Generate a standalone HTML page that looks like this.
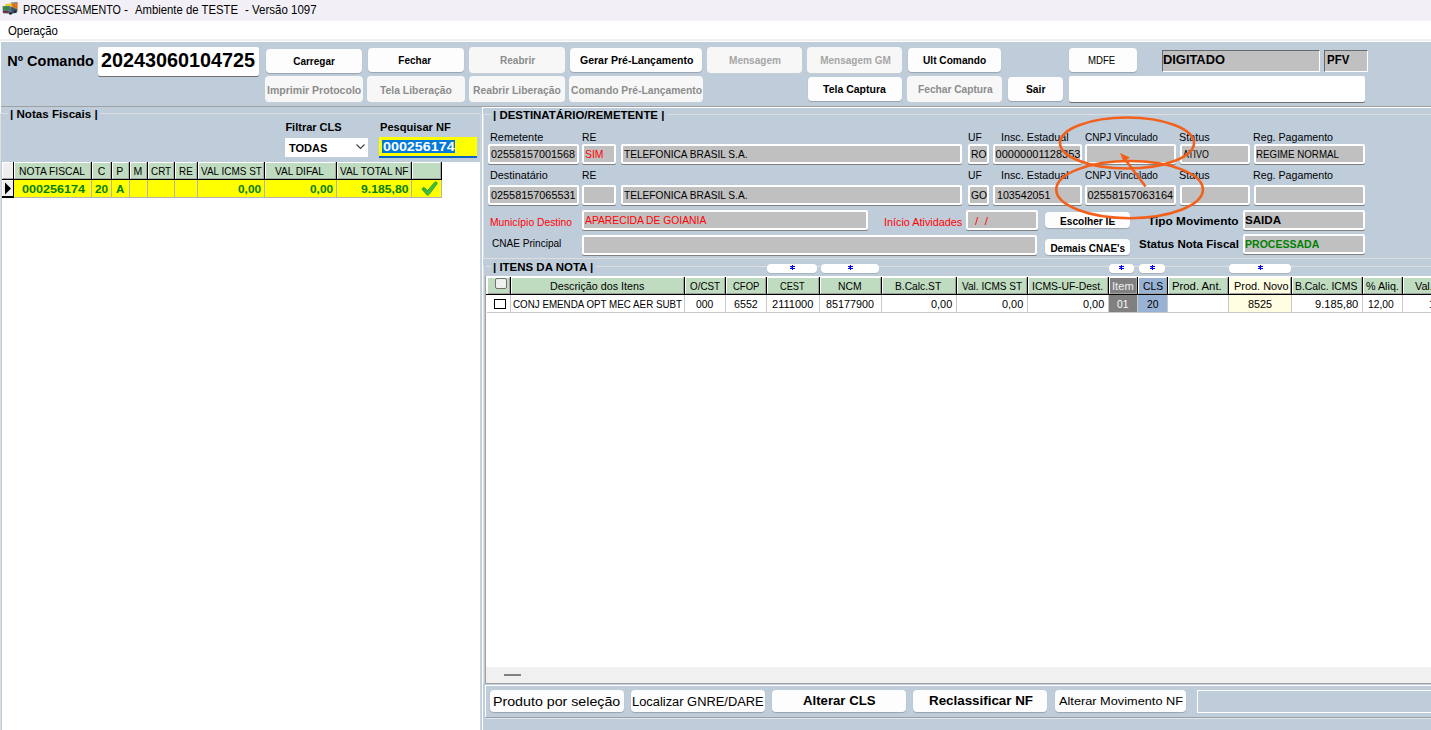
<!DOCTYPE html><html><head><meta charset="utf-8"><style>
html,body{margin:0;padding:0;width:1431px;height:730px;overflow:hidden;background:#bfcddb}
body{position:relative;font-family:"Liberation Sans",sans-serif}
.a{position:absolute}
.t{position:absolute;white-space:pre}
</style></head><body>
<div class="a" style="left:0px;top:0px;width:1431px;height:21px;background:#f2f0f6"></div>
<svg class="a" style="left:0;top:0" width="24" height="20" viewBox="0 0 24 20">
<path d="M11 2.6 L17.2 2 L17.8 3.2 L11.5 4.2 Z" fill="#6a8298"/>
<path d="M5.2 4 L11.6 3.2 L12 6.3 L5.4 6.8 Z" fill="#e8cc30"/>
<path d="M11.5 3.6 L17.8 2.8 L17.6 9.6 L11.8 10.2 Z" fill="#e0822a"/>
<path d="M13 4 L13.2 9.8 M14.6 3.8 L14.8 9.6 M16.2 3.4 L16.4 9.4" stroke="#b85a18" stroke-width="0.5"/>
<path d="M2.6 6.2 L10.2 6 L10.6 13.8 L2.8 13.2 Z" fill="#56748a"/>
<path d="M3.2 6.6 L9 6.4 L9.2 9.8 L3.2 9.8 Z" fill="#2f8a3c"/>
<path d="M3.2 11 L8.6 11.2 L8.6 12.6 L3.2 12.4 Z" fill="#7a1414"/>
<path d="M10.2 6.5 L17.6 9.4 L17 12.6 L10.6 14.2 Z" fill="#3c566a"/>
<circle cx="10.4" cy="13.4" r="1.4" fill="#1c2a36"/><circle cx="15" cy="11.6" r="1.3" fill="#1c2a36"/>
</svg>
<div class="t" style="left:23.00px;top:3.80px;font-size:12px;line-height:12px;color:#000;transform:scaleX(0.8915);transform-origin:0 0;">PROCESSAMENTO</div>
<div class="t" style="left:124.10px;top:3.80px;font-size:12px;line-height:12px;color:#000;">-</div>
<div class="t" style="left:135.40px;top:3.80px;font-size:12px;line-height:12px;color:#000;transform:scaleX(0.9430);transform-origin:0 0;">Ambiente de TESTE</div>
<div class="t" style="left:245.20px;top:3.80px;font-size:12px;line-height:12px;color:#000;transform:scaleX(0.9581);transform-origin:0 0;">- Versão 1097</div>
<div class="a" style="left:0px;top:21px;width:1431px;height:18px;background:#fff"></div>
<div class="t" style="left:8.00px;top:24.80px;font-size:12px;line-height:12px;color:#000;transform:scaleX(0.9469);transform-origin:0 0;">Operação</div>
<div class="a" style="left:0px;top:39px;width:1431px;height:2px;background:#f0f0f0"></div>
<div class="a" style="left:0px;top:41px;width:1431px;height:1px;background:#fff"></div>
<div class="a" style="left:1px;top:42px;width:1430px;height:688px;background:#bfcddb"></div>
<div class="a" style="left:0px;top:42px;width:1px;height:71px;background:#fff"></div>
<div class="t" style="left:7.30px;top:54.47px;font-size:14.5px;line-height:14.5px;color:#000;font-weight:bold;">Nº Comando</div>
<div class="a" style="left:98px;top:47px;width:161px;height:29px;background:#fff;border-radius:2px;box-shadow:0 1px 0 #707070"></div>
<div class="t" style="left:101.20px;top:51.14px;font-size:19.6px;line-height:19.6px;color:#000;font-weight:bold;transform:scaleX(1.0094);transform-origin:0 0;">20243060104725</div>
<div class="a" style="left:266px;top:49px;width:96px;height:24px;background:#fdfdfd;border-radius:4px;box-shadow:0 1px 1px #9aa4ae"></div>
<div class="t" style="left:293.20px;top:56.50px;font-size:10px;line-height:10px;color:#000;font-weight:bold;">Carregar</div>
<div class="a" style="left:368px;top:48px;width:96px;height:24px;background:#fdfdfd;border-radius:4px;box-shadow:0 1px 1px #9aa4ae"></div>
<div class="t" style="left:398.30px;top:55.50px;font-size:10px;line-height:10px;color:#000;font-weight:bold;">Fechar</div>
<div class="a" style="left:469px;top:47px;width:96px;height:26px;background:#f7f7f7;border-radius:4px;box-shadow:0 1px 0 #c6ced6"></div>
<div class="t" style="left:500.00px;top:55.50px;font-size:10px;line-height:10px;color:#8c8c8c;font-weight:bold;transform:scaleX(1.0052);transform-origin:0 0;">Reabrir</div>
<div class="a" style="left:570px;top:48px;width:132px;height:24px;background:#fdfdfd;border-radius:4px;box-shadow:0 1px 1px #9aa4ae"></div>
<div class="t" style="left:580.00px;top:55.50px;font-size:10px;line-height:10px;color:#000;font-weight:bold;transform:scaleX(1.0511);transform-origin:0 0;">Gerar Pré-Lançamento</div>
<div class="a" style="left:707px;top:47px;width:95px;height:26px;background:#f7f7f7;border-radius:4px;box-shadow:0 1px 0 #c6ced6"></div>
<div class="t" style="left:729.40px;top:55.50px;font-size:10px;line-height:10px;color:#a6a6a6;font-weight:bold;transform:scaleX(1.0061);transform-origin:0 0;">Mensagem</div>
<div class="a" style="left:807px;top:47px;width:95px;height:26px;background:#f7f7f7;border-radius:4px;box-shadow:0 1px 0 #c6ced6"></div>
<div class="t" style="left:820.20px;top:55.50px;font-size:10px;line-height:10px;color:#a6a6a6;font-weight:bold;">Mensagem GM</div>
<div class="a" style="left:908px;top:48px;width:93px;height:24px;background:#fdfdfd;border-radius:4px;box-shadow:0 1px 1px #9aa4ae"></div>
<div class="t" style="left:923.40px;top:55.50px;font-size:10px;line-height:10px;color:#000;font-weight:bold;transform:scaleX(1.0145);transform-origin:0 0;">Ult Comando</div>
<div class="a" style="left:1069px;top:48px;width:68px;height:24px;background:#fdfdfd;border-radius:4px;box-shadow:0 1px 1px #9aa4ae"></div>
<div class="t" style="left:1088.00px;top:55.08px;font-size:10.5px;line-height:10.5px;color:#000;transform:scaleX(0.9149);transform-origin:0 0;">MDFE</div>
<div class="a" style="left:1162px;top:50px;width:158px;height:22px;background:#c0c0c0;border-top:1px solid #696969;border-left:1px solid #696969;border-bottom:1px solid #fff;border-right:1px solid #fff;box-sizing:border-box"></div>
<div class="t" style="left:1163.40px;top:53.50px;font-size:12px;line-height:12px;color:#000;font-weight:bold;transform:scaleX(1.0726);transform-origin:0 0;">DIGITADO</div>
<div class="a" style="left:1324px;top:50px;width:44px;height:22px;background:#c0c0c0;border-top:1px solid #696969;border-left:1px solid #696969;border-bottom:1px solid #fff;border-right:1px solid #fff;box-sizing:border-box"></div>
<div class="t" style="left:1326.50px;top:53.50px;font-size:12px;line-height:12px;color:#000;font-weight:bold;transform:scaleX(0.9541);transform-origin:0 0;">PFV</div>
<div class="a" style="left:265px;top:76px;width:98px;height:26px;background:#f7f7f7;border-radius:4px;box-shadow:0 1px 0 #c6ced6"></div>
<div class="t" style="left:267.20px;top:85.70px;font-size:10px;line-height:10px;color:#8c8c8c;font-weight:bold;transform:scaleX(1.0537);transform-origin:0 0;">Imprimir Protocolo</div>
<div class="a" style="left:367px;top:76px;width:98px;height:26px;background:#f7f7f7;border-radius:4px;box-shadow:0 1px 0 #c6ced6"></div>
<div class="t" style="left:380.40px;top:85.70px;font-size:10px;line-height:10px;color:#8c8c8c;font-weight:bold;transform:scaleX(1.0372);transform-origin:0 0;">Tela Liberação</div>
<div class="a" style="left:469px;top:76px;width:96px;height:26px;background:#f7f7f7;border-radius:4px;box-shadow:0 1px 0 #c6ced6"></div>
<div class="t" style="left:473.10px;top:85.70px;font-size:10px;line-height:10px;color:#8c8c8c;font-weight:bold;transform:scaleX(1.0335);transform-origin:0 0;">Reabrir Liberação</div>
<div class="a" style="left:569px;top:76px;width:134px;height:26px;background:#f7f7f7;border-radius:4px;box-shadow:0 1px 0 #c6ced6"></div>
<div class="t" style="left:571.20px;top:85.70px;font-size:10px;line-height:10px;color:#8c8c8c;font-weight:bold;transform:scaleX(1.0298);transform-origin:0 0;">Comando Pré-Lançamento</div>
<div class="a" style="left:808px;top:77px;width:94px;height:24px;background:#fdfdfd;border-radius:4px;box-shadow:0 1px 1px #9aa4ae"></div>
<div class="t" style="left:823.20px;top:84.80px;font-size:10px;line-height:10px;color:#000;font-weight:bold;transform:scaleX(1.0501);transform-origin:0 0;">Tela Captura</div>
<div class="a" style="left:907px;top:76px;width:95px;height:26px;background:#f7f7f7;border-radius:4px;box-shadow:0 1px 0 #c6ced6"></div>
<div class="t" style="left:917.60px;top:84.80px;font-size:10px;line-height:10px;color:#8c8c8c;font-weight:bold;transform:scaleX(1.0184);transform-origin:0 0;">Fechar Captura</div>
<div class="a" style="left:1008px;top:77px;width:55px;height:24px;background:#fdfdfd;border-radius:4px;box-shadow:0 1px 1px #9aa4ae"></div>
<div class="t" style="left:1025.80px;top:84.80px;font-size:10px;line-height:10px;color:#000;font-weight:bold;transform:scaleX(1.0294);transform-origin:0 0;">Sair</div>
<div class="a" style="left:1069px;top:76px;width:296px;height:26px;background:#fff;border-radius:2px;box-shadow:0 1px 0 #707070"></div>
<div class="a" style="left:1px;top:106px;width:1430px;height:1px;background:#a0a0a0"></div>
<div class="a" style="left:0px;top:113px;width:8px;height:1px;background:#dedede"></div>
<div class="a" style="left:100px;top:113px;width:381px;height:1px;background:#dedede"></div>
<div class="a" style="left:0px;top:113px;width:1px;height:617px;background:#dedede"></div>
<div class="t" style="left:10.00px;top:108.95px;font-size:11px;line-height:11px;color:#000;font-weight:bold;transform:scaleX(1.0541);transform-origin:0 0;">| Notas Fiscais |</div>
<div class="t" style="left:285.40px;top:122.45px;font-size:11px;line-height:11px;color:#000;font-weight:bold;">Filtrar CLS</div>
<div class="a" style="left:285px;top:138px;width:83px;height:19px;background:#fff"></div>
<div class="t" style="left:289.00px;top:142.95px;font-size:11px;line-height:11px;color:#000;font-weight:bold;">TODAS</div>
<svg class="a" style="left:355px;top:143px" width="11" height="8"><path d="M1.5 1.5 L5.5 5.5 L9.5 1.5" stroke="#404040" stroke-width="1.1" fill="none"/></svg>
<div class="t" style="left:380.40px;top:121.65px;font-size:11px;line-height:11px;color:#000;font-weight:bold;transform:scaleX(1.0066);transform-origin:0 0;">Pesquisar NF</div>
<div class="a" style="left:379px;top:137px;width:98px;height:21px;background:#ffff00"></div>
<div class="a" style="left:379px;top:156px;width:98px;height:2px;background:#0a64c8"></div>
<div class="a" style="left:381.8px;top:140px;width:72.80000000000001px;height:13px;background:#0078d7"></div>
<div class="t" style="left:382.50px;top:141.30px;font-size:12px;line-height:12px;color:#fff;font-weight:bold;transform:scaleX(1.1919);transform-origin:0 0;">000256174</div>
<div class="a" style="left:2px;top:162px;width:478px;height:568px;background:#fff"></div>
<div class="a" style="left:2px;top:162px;width:11px;height:17px;background:#efefef;border-top:1px solid #fff;border-left:1px solid #fff;border-bottom:1px solid #a8a8a8;box-sizing:border-box"></div>
<div class="a" style="left:2px;top:180px;width:11px;height:16px;background:#efefef;border-top:1px solid #fff;border-left:1px solid #fff;box-sizing:border-box"></div>
<div class="a" style="left:13px;top:162px;width:1px;height:36px;background:#000"></div>
<div class="a" style="left:2px;top:196px;width:11px;height:2px;background:#000"></div>
<svg class="a" style="left:4px;top:182px" width="8" height="13"><path d="M1 0.5 L7 6.5 L1 12.5 Z" fill="#000"/></svg>
<div class="a" style="left:2px;top:179px;width:440px;height:1px;background:#000"></div>
<div class="a" style="left:14px;top:162px;width:77px;height:17px;background:#c0dcc0;border-top:1px solid #fff;border-left:1px solid #fff;border-right:1px solid #a8a8a8;border-bottom:1px solid #a8a8a8;box-sizing:border-box"></div>
<div class="a" style="left:91px;top:162px;width:1px;height:18px;background:#000"></div>
<div class="a" style="left:14px;top:180px;width:77px;height:17px;background:#ffff00"></div>
<div class="a" style="left:91px;top:180px;width:1px;height:18px;background:#b4b4b4"></div>
<div class="a" style="left:14px;top:197px;width:78px;height:1px;background:#b4b4b4"></div>
<div class="a" style="left:92px;top:162px;width:19px;height:17px;background:#c0dcc0;border-top:1px solid #fff;border-left:1px solid #fff;border-right:1px solid #a8a8a8;border-bottom:1px solid #a8a8a8;box-sizing:border-box"></div>
<div class="a" style="left:111px;top:162px;width:1px;height:18px;background:#000"></div>
<div class="a" style="left:92px;top:180px;width:19px;height:17px;background:#ffff00"></div>
<div class="a" style="left:111px;top:180px;width:1px;height:18px;background:#b4b4b4"></div>
<div class="a" style="left:92px;top:197px;width:20px;height:1px;background:#b4b4b4"></div>
<div class="a" style="left:112px;top:162px;width:17px;height:17px;background:#c0dcc0;border-top:1px solid #fff;border-left:1px solid #fff;border-right:1px solid #a8a8a8;border-bottom:1px solid #a8a8a8;box-sizing:border-box"></div>
<div class="a" style="left:129px;top:162px;width:1px;height:18px;background:#000"></div>
<div class="a" style="left:112px;top:180px;width:17px;height:17px;background:#ffff00"></div>
<div class="a" style="left:129px;top:180px;width:1px;height:18px;background:#b4b4b4"></div>
<div class="a" style="left:112px;top:197px;width:18px;height:1px;background:#b4b4b4"></div>
<div class="a" style="left:130px;top:162px;width:17px;height:17px;background:#c0dcc0;border-top:1px solid #fff;border-left:1px solid #fff;border-right:1px solid #a8a8a8;border-bottom:1px solid #a8a8a8;box-sizing:border-box"></div>
<div class="a" style="left:147px;top:162px;width:1px;height:18px;background:#000"></div>
<div class="a" style="left:130px;top:180px;width:17px;height:17px;background:#ffff00"></div>
<div class="a" style="left:147px;top:180px;width:1px;height:18px;background:#b4b4b4"></div>
<div class="a" style="left:130px;top:197px;width:18px;height:1px;background:#b4b4b4"></div>
<div class="a" style="left:148px;top:162px;width:26px;height:17px;background:#c0dcc0;border-top:1px solid #fff;border-left:1px solid #fff;border-right:1px solid #a8a8a8;border-bottom:1px solid #a8a8a8;box-sizing:border-box"></div>
<div class="a" style="left:174px;top:162px;width:1px;height:18px;background:#000"></div>
<div class="a" style="left:148px;top:180px;width:26px;height:17px;background:#ffff00"></div>
<div class="a" style="left:174px;top:180px;width:1px;height:18px;background:#b4b4b4"></div>
<div class="a" style="left:148px;top:197px;width:27px;height:1px;background:#b4b4b4"></div>
<div class="a" style="left:175px;top:162px;width:22px;height:17px;background:#c0dcc0;border-top:1px solid #fff;border-left:1px solid #fff;border-right:1px solid #a8a8a8;border-bottom:1px solid #a8a8a8;box-sizing:border-box"></div>
<div class="a" style="left:197px;top:162px;width:1px;height:18px;background:#000"></div>
<div class="a" style="left:175px;top:180px;width:22px;height:17px;background:#ffff00"></div>
<div class="a" style="left:197px;top:180px;width:1px;height:18px;background:#b4b4b4"></div>
<div class="a" style="left:175px;top:197px;width:23px;height:1px;background:#b4b4b4"></div>
<div class="a" style="left:198px;top:162px;width:66px;height:17px;background:#c0dcc0;border-top:1px solid #fff;border-left:1px solid #fff;border-right:1px solid #a8a8a8;border-bottom:1px solid #a8a8a8;box-sizing:border-box"></div>
<div class="a" style="left:264px;top:162px;width:1px;height:18px;background:#000"></div>
<div class="a" style="left:198px;top:180px;width:66px;height:17px;background:#ffff00"></div>
<div class="a" style="left:264px;top:180px;width:1px;height:18px;background:#b4b4b4"></div>
<div class="a" style="left:198px;top:197px;width:67px;height:1px;background:#b4b4b4"></div>
<div class="a" style="left:265px;top:162px;width:71px;height:17px;background:#c0dcc0;border-top:1px solid #fff;border-left:1px solid #fff;border-right:1px solid #a8a8a8;border-bottom:1px solid #a8a8a8;box-sizing:border-box"></div>
<div class="a" style="left:336px;top:162px;width:1px;height:18px;background:#000"></div>
<div class="a" style="left:265px;top:180px;width:71px;height:17px;background:#ffff00"></div>
<div class="a" style="left:336px;top:180px;width:1px;height:18px;background:#b4b4b4"></div>
<div class="a" style="left:265px;top:197px;width:72px;height:1px;background:#b4b4b4"></div>
<div class="a" style="left:337px;top:162px;width:74px;height:17px;background:#c0dcc0;border-top:1px solid #fff;border-left:1px solid #fff;border-right:1px solid #a8a8a8;border-bottom:1px solid #a8a8a8;box-sizing:border-box"></div>
<div class="a" style="left:411px;top:162px;width:1px;height:18px;background:#000"></div>
<div class="a" style="left:337px;top:180px;width:74px;height:17px;background:#ffff00"></div>
<div class="a" style="left:411px;top:180px;width:1px;height:18px;background:#b4b4b4"></div>
<div class="a" style="left:337px;top:197px;width:75px;height:1px;background:#b4b4b4"></div>
<div class="a" style="left:412px;top:162px;width:29px;height:17px;background:#c0dcc0;border-top:1px solid #fff;border-left:1px solid #fff;border-right:1px solid #a8a8a8;border-bottom:1px solid #a8a8a8;box-sizing:border-box"></div>
<div class="a" style="left:441px;top:162px;width:1px;height:18px;background:#000"></div>
<div class="a" style="left:412px;top:180px;width:29px;height:17px;background:#ffff00"></div>
<div class="a" style="left:441px;top:180px;width:1px;height:18px;background:#b4b4b4"></div>
<div class="a" style="left:412px;top:197px;width:30px;height:1px;background:#b4b4b4"></div>
<div class="t" style="left:18.50px;top:165.77px;font-size:10.5px;line-height:10.5px;color:#000;transform:scaleX(0.9782);transform-origin:0 0;">NOTA FISCAL</div>
<div class="t" style="left:97.80px;top:165.77px;font-size:10.5px;line-height:10.5px;color:#000;">C</div>
<div class="t" style="left:116.30px;top:165.77px;font-size:10.5px;line-height:10.5px;color:#000;">P</div>
<div class="t" style="left:133.50px;top:165.77px;font-size:10.5px;line-height:10.5px;color:#000;">M</div>
<div class="t" style="left:150.50px;top:165.77px;font-size:10.5px;line-height:10.5px;color:#000;transform:scaleX(0.9400);transform-origin:0 0;">CRT</div>
<div class="t" style="left:179.40px;top:165.77px;font-size:10.5px;line-height:10.5px;color:#000;transform:scaleX(0.9400);transform-origin:0 0;">RE</div>
<div class="t" style="left:200.60px;top:165.77px;font-size:10.5px;line-height:10.5px;color:#000;transform:scaleX(0.9484);transform-origin:0 0;">VAL ICMS ST</div>
<div class="t" style="left:275.00px;top:165.77px;font-size:10.5px;line-height:10.5px;color:#000;transform:scaleX(0.9634);transform-origin:0 0;">VAL DIFAL</div>
<div class="t" style="left:340.00px;top:165.77px;font-size:10.5px;line-height:10.5px;color:#000;transform:scaleX(0.9682);transform-origin:0 0;">VAL TOTAL NF</div>
<div class="t" style="left:21.50px;top:183.72px;font-size:11.5px;line-height:11.5px;color:#008000;font-weight:bold;transform:scaleX(1.0948);transform-origin:0 0;">000256174</div>
<div class="t" style="left:94.90px;top:183.72px;font-size:11.5px;line-height:11.5px;color:#008000;font-weight:bold;transform:scaleX(1.0238);transform-origin:0 0;">20</div>
<div class="t" style="left:115.90px;top:183.72px;font-size:11.5px;line-height:11.5px;color:#008000;font-weight:bold;">A</div>
<div class="t" style="left:237.70px;top:183.72px;font-size:11.5px;line-height:11.5px;color:#008000;font-weight:bold;transform:scaleX(1.0306);transform-origin:0 0;">0,00</div>
<div class="t" style="left:309.70px;top:183.72px;font-size:11.5px;line-height:11.5px;color:#008000;font-weight:bold;transform:scaleX(1.0306);transform-origin:0 0;">0,00</div>
<div class="t" style="left:360.90px;top:183.72px;font-size:11.5px;line-height:11.5px;color:#008000;font-weight:bold;transform:scaleX(1.0610);transform-origin:0 0;">9.185,80</div>
<svg class="a" style="left:420px;top:180px" width="19" height="17" viewBox="0 0 19 17"><defs><linearGradient id="gk" x1="0" y1="0" x2="1" y2="1"><stop offset="0" stop-color="#20a030"/><stop offset="1" stop-color="#60d060"/></linearGradient></defs><path d="M2.2 9.4 Q2 8.2 3.2 7.6 Q4 7.2 4.8 7.9 L7.6 10.6 L14.6 2.4 Q15.4 1.6 16.4 2.1 Q17.6 2.8 17 4 L9 14.6 Q8 15.8 6.8 14.8 Z" fill="url(#gk)" stroke="#109020" stroke-width="0.7"/></svg>
<div class="a" style="left:480px;top:113px;width:1px;height:617px;background:#cbd5df"></div>
<div class="a" style="left:482px;top:107px;width:949px;height:1px;background:#fff"></div>
<div class="a" style="left:482px;top:107px;width:1px;height:623px;background:#fff"></div>
<div class="a" style="left:483px;top:114px;width:8px;height:1px;background:#dedede"></div>
<div class="a" style="left:667px;top:114px;width:764px;height:1px;background:#dedede"></div>
<div class="a" style="left:483px;top:114px;width:1px;height:144px;background:#dedede"></div>
<div class="a" style="left:483px;top:258px;width:948px;height:1px;background:#dedede"></div>
<div class="t" style="left:493.00px;top:109.65px;font-size:11px;line-height:11px;color:#000;font-weight:bold;transform:scaleX(1.0396);transform-origin:0 0;">| DESTINATÁRIO/REMETENTE |</div>
<div class="t" style="left:490.30px;top:131.65px;font-size:11px;line-height:11px;color:#000;transform:scaleX(0.9893);transform-origin:0 0;">Remetente</div>
<div class="t" style="left:581.50px;top:131.65px;font-size:11px;line-height:11px;color:#000;transform:scaleX(0.9400);transform-origin:0 0;">RE</div>
<div class="t" style="left:967.80px;top:131.65px;font-size:11px;line-height:11px;color:#000;transform:scaleX(0.9400);transform-origin:0 0;">UF</div>
<div class="t" style="left:1000.90px;top:131.65px;font-size:11px;line-height:11px;color:#000;transform:scaleX(0.9789);transform-origin:0 0;">Insc. Estadual</div>
<div class="t" style="left:1084.70px;top:131.65px;font-size:11px;line-height:11px;color:#000;transform:scaleX(0.9122);transform-origin:0 0;">CNPJ Vinculado</div>
<div class="t" style="left:1179.00px;top:131.65px;font-size:11px;line-height:11px;color:#000;transform:scaleX(0.9854);transform-origin:0 0;">Status</div>
<div class="t" style="left:1252.60px;top:131.65px;font-size:11px;line-height:11px;color:#000;transform:scaleX(0.9696);transform-origin:0 0;">Reg. Pagamento</div>
<div class="a" style="left:488px;top:144px;width:91px;height:20px;background:#c0c0c0;border:2px solid #fff;border-radius:2px;box-sizing:border-box;box-shadow:0 1px 0 #808080"></div>
<div class="a" style="left:582px;top:144px;width:34px;height:20px;background:#c0c0c0;border:2px solid #fff;border-radius:2px;box-sizing:border-box;box-shadow:0 1px 0 #808080"></div>
<div class="a" style="left:621px;top:144px;width:341px;height:20px;background:#c0c0c0;border:2px solid #fff;border-radius:2px;box-sizing:border-box;box-shadow:0 1px 0 #808080"></div>
<div class="a" style="left:968px;top:144px;width:21px;height:20px;background:#c0c0c0;border:2px solid #fff;border-radius:2px;box-sizing:border-box;box-shadow:0 1px 0 #808080"></div>
<div class="a" style="left:993px;top:144px;width:89px;height:20px;background:#c0c0c0;border:2px solid #fff;border-radius:2px;box-sizing:border-box;box-shadow:0 1px 0 #808080"></div>
<div class="a" style="left:1085px;top:144px;width:91px;height:20px;background:#c0c0c0;border:2px solid #fff;border-radius:2px;box-sizing:border-box;box-shadow:0 1px 0 #808080"></div>
<div class="a" style="left:1180px;top:144px;width:70px;height:20px;background:#c0c0c0;border:2px solid #fff;border-radius:2px;box-sizing:border-box;box-shadow:0 1px 0 #808080"></div>
<div class="a" style="left:1254px;top:144px;width:111px;height:20px;background:#c0c0c0;border:2px solid #fff;border-radius:2px;box-sizing:border-box;box-shadow:0 1px 0 #808080"></div>
<div class="t" style="left:489.60px;top:170.15px;font-size:11px;line-height:11px;color:#000;transform:scaleX(0.9840);transform-origin:0 0;">Destinatário</div>
<div class="t" style="left:581.50px;top:170.15px;font-size:11px;line-height:11px;color:#000;transform:scaleX(0.9400);transform-origin:0 0;">RE</div>
<div class="t" style="left:967.80px;top:170.15px;font-size:11px;line-height:11px;color:#000;transform:scaleX(0.9400);transform-origin:0 0;">UF</div>
<div class="t" style="left:1000.90px;top:170.15px;font-size:11px;line-height:11px;color:#000;transform:scaleX(0.9789);transform-origin:0 0;">Insc. Estadual</div>
<div class="t" style="left:1084.70px;top:170.15px;font-size:11px;line-height:11px;color:#000;transform:scaleX(0.9122);transform-origin:0 0;">CNPJ Vinculado</div>
<div class="t" style="left:1179.00px;top:170.15px;font-size:11px;line-height:11px;color:#000;transform:scaleX(0.9854);transform-origin:0 0;">Status</div>
<div class="t" style="left:1252.60px;top:170.15px;font-size:11px;line-height:11px;color:#000;transform:scaleX(0.9696);transform-origin:0 0;">Reg. Pagamento</div>
<div class="a" style="left:488px;top:185px;width:91px;height:20px;background:#c0c0c0;border:2px solid #fff;border-radius:2px;box-sizing:border-box;box-shadow:0 1px 0 #808080"></div>
<div class="a" style="left:582px;top:185px;width:34px;height:20px;background:#c0c0c0;border:2px solid #fff;border-radius:2px;box-sizing:border-box;box-shadow:0 1px 0 #808080"></div>
<div class="a" style="left:621px;top:185px;width:341px;height:20px;background:#c0c0c0;border:2px solid #fff;border-radius:2px;box-sizing:border-box;box-shadow:0 1px 0 #808080"></div>
<div class="a" style="left:968px;top:185px;width:21px;height:20px;background:#c0c0c0;border:2px solid #fff;border-radius:2px;box-sizing:border-box;box-shadow:0 1px 0 #808080"></div>
<div class="a" style="left:993px;top:185px;width:89px;height:20px;background:#c0c0c0;border:2px solid #fff;border-radius:2px;box-sizing:border-box;box-shadow:0 1px 0 #808080"></div>
<div class="a" style="left:1085px;top:185px;width:91px;height:20px;background:#c0c0c0;border:2px solid #fff;border-radius:2px;box-sizing:border-box;box-shadow:0 1px 0 #808080"></div>
<div class="a" style="left:1180px;top:185px;width:70px;height:20px;background:#c0c0c0;border:2px solid #fff;border-radius:2px;box-sizing:border-box;box-shadow:0 1px 0 #808080"></div>
<div class="a" style="left:1254px;top:185px;width:111px;height:20px;background:#c0c0c0;border:2px solid #fff;border-radius:2px;box-sizing:border-box;box-shadow:0 1px 0 #808080"></div>
<div class="t" style="left:490.70px;top:148.65px;font-size:11px;line-height:11px;color:#000;transform:scaleX(0.9816);transform-origin:0 0;">02558157001568</div>
<div class="t" style="left:584.60px;top:148.65px;font-size:11px;line-height:11px;color:#ff0000;transform:scaleX(0.9400);transform-origin:0 0;">SIM</div>
<div class="t" style="left:624.00px;top:148.65px;font-size:11px;line-height:11px;color:#000;transform:scaleX(0.9209);transform-origin:0 0;">TELEFONICA BRASIL S.A.</div>
<div class="t" style="left:970.50px;top:148.65px;font-size:11px;line-height:11px;color:#000;transform:scaleX(0.9400);transform-origin:0 0;">RO</div>
<div class="t" style="left:995.60px;top:148.65px;font-size:11px;line-height:11px;color:#000;">00000001128353</div>
<div class="t" style="left:1183.30px;top:148.65px;font-size:11px;line-height:11px;color:#000;transform:scaleX(0.8000);transform-origin:0 0;">ATIVO</div>
<div class="t" style="left:1256.30px;top:148.65px;font-size:11px;line-height:11px;color:#000;transform:scaleX(0.8873);transform-origin:0 0;">REGIME NORMAL</div>
<div class="t" style="left:490.70px;top:189.55px;font-size:11px;line-height:11px;color:#000;transform:scaleX(0.9875);transform-origin:0 0;">02558157065531</div>
<div class="t" style="left:624.00px;top:189.55px;font-size:11px;line-height:11px;color:#000;transform:scaleX(0.9209);transform-origin:0 0;">TELEFONICA BRASIL S.A.</div>
<div class="t" style="left:970.50px;top:189.55px;font-size:11px;line-height:11px;color:#000;transform:scaleX(0.9400);transform-origin:0 0;">GO</div>
<div class="t" style="left:996.70px;top:189.55px;font-size:11px;line-height:11px;color:#000;transform:scaleX(0.9705);transform-origin:0 0;">103542051</div>
<div class="t" style="left:1087.50px;top:189.55px;font-size:11px;line-height:11px;color:#000;">02558157063164</div>
<div class="t" style="left:490.40px;top:216.65px;font-size:11px;line-height:11px;color:#ff0000;transform:scaleX(0.9372);transform-origin:0 0;">Município Destino</div>
<div class="a" style="left:582px;top:210px;width:286px;height:20px;background:#c0c0c0;border:2px solid #fff;border-radius:2px;box-sizing:border-box;box-shadow:0 1px 0 #808080"></div>
<div class="t" style="left:584.50px;top:214.95px;font-size:11px;line-height:11px;color:#ff0000;transform:scaleX(0.9372);transform-origin:0 0;">APARECIDA DE GOIANIA</div>
<div class="t" style="left:883.60px;top:216.65px;font-size:11px;line-height:11px;color:#ff0000;transform:scaleX(0.9840);transform-origin:0 0;">Início Atividades</div>
<div class="a" style="left:966px;top:210px;width:72px;height:20px;background:#c0c0c0;border:2px solid #fff;border-radius:2px;box-sizing:border-box;box-shadow:0 1px 0 #808080"></div>
<div class="t" style="left:975.00px;top:215.65px;font-size:11px;line-height:11px;color:#ff0000;transform:scaleX(1.0698);transform-origin:0 0;">/  /</div>
<div class="a" style="left:1045px;top:212px;width:85px;height:16px;background:#fdfdfd;border-radius:4px;box-shadow:0 1px 1px #9aa4ae"></div>
<div class="t" style="left:1060.30px;top:216.60px;font-size:10px;line-height:10px;color:#000;font-weight:bold;transform:scaleX(1.0127);transform-origin:0 0;">Escolher IE</div>
<div class="t" style="left:1148.40px;top:215.95px;font-size:11px;line-height:11px;color:#000;font-weight:bold;transform:scaleX(1.0769);transform-origin:0 0;">Tipo Movimento</div>
<div class="a" style="left:1243px;top:210px;width:122px;height:20px;background:#c0c0c0;border:2px solid #fff;border-radius:2px;box-sizing:border-box;box-shadow:0 1px 0 #808080"></div>
<div class="t" style="left:1245.30px;top:214.55px;font-size:11px;line-height:11px;color:#000;font-weight:bold;transform:scaleX(1.0523);transform-origin:0 0;">SAIDA</div>
<div class="t" style="left:491.70px;top:238.45px;font-size:11px;line-height:11px;color:#000;transform:scaleX(0.9150);transform-origin:0 0;">CNAE Principal</div>
<div class="a" style="left:582px;top:235px;width:455px;height:20px;background:#c0c0c0;border:2px solid #fff;border-radius:2px;box-sizing:border-box;box-shadow:0 1px 0 #808080"></div>
<div class="a" style="left:1045px;top:239px;width:85px;height:16px;background:#fdfdfd;border-radius:4px;box-shadow:0 1px 1px #9aa4ae"></div>
<div class="t" style="left:1050.40px;top:243.70px;font-size:10px;line-height:10px;color:#000;font-weight:bold;">Demais CNAE&#x27;s</div>
<div class="t" style="left:1139.20px;top:239.45px;font-size:11px;line-height:11px;color:#000;font-weight:bold;transform:scaleX(1.0477);transform-origin:0 0;">Status Nota Fiscal</div>
<div class="a" style="left:1243px;top:234px;width:122px;height:20px;background:#c0c0c0;border:2px solid #fff;border-radius:2px;box-sizing:border-box;box-shadow:0 1px 0 #808080"></div>
<div class="t" style="left:1245.30px;top:238.75px;font-size:11px;line-height:11px;color:#008000;font-weight:bold;transform:scaleX(0.9574);transform-origin:0 0;">PROCESSADA</div>
<div class="a" style="left:486px;top:266px;width:5px;height:1px;background:#dedede"></div>
<div class="a" style="left:596px;top:266px;width:835px;height:1px;background:#dedede"></div>
<div class="a" style="left:483px;top:266px;width:1px;height:418px;background:#dedede"></div>
<div class="a" style="left:485px;top:276px;width:1px;height:408px;background:#a0a0a0"></div>
<div class="t" style="left:493.20px;top:262.05px;font-size:11px;line-height:11px;color:#000;font-weight:bold;transform:scaleX(1.0426);transform-origin:0 0;">| ITENS DA NOTA |</div>
<div class="a" style="left:767px;top:264px;width:50px;height:9px;background:#fff;border-radius:4px;box-shadow:0 1px 0 #aab4be"></div>
<svg class="a" style="left:790px;top:265px" width="5" height="5" shape-rendering="crispEdges"><g fill="#0000ff"><rect x="2" y="0" width="1" height="5"/><rect x="0" y="1" width="2" height="1"/><rect x="3" y="1" width="2" height="1"/><rect x="0" y="3" width="2" height="1"/><rect x="3" y="3" width="2" height="1"/><rect x="1" y="2" width="1" height="1" fill="#6060ff"/></g></svg>
<div class="a" style="left:821px;top:264px;width:58px;height:9px;background:#fff;border-radius:4px;box-shadow:0 1px 0 #aab4be"></div>
<svg class="a" style="left:848px;top:265px" width="5" height="5" shape-rendering="crispEdges"><g fill="#0000ff"><rect x="2" y="0" width="1" height="5"/><rect x="0" y="1" width="2" height="1"/><rect x="3" y="1" width="2" height="1"/><rect x="0" y="3" width="2" height="1"/><rect x="3" y="3" width="2" height="1"/><rect x="1" y="2" width="1" height="1" fill="#6060ff"/></g></svg>
<div class="a" style="left:1109px;top:264px;width:25px;height:9px;background:#fff;border-radius:4px;box-shadow:0 1px 0 #aab4be"></div>
<svg class="a" style="left:1119px;top:265px" width="5" height="5" shape-rendering="crispEdges"><g fill="#0000ff"><rect x="2" y="0" width="1" height="5"/><rect x="0" y="1" width="2" height="1"/><rect x="3" y="1" width="2" height="1"/><rect x="0" y="3" width="2" height="1"/><rect x="3" y="3" width="2" height="1"/><rect x="1" y="2" width="1" height="1" fill="#6060ff"/></g></svg>
<div class="a" style="left:1139px;top:264px;width:26px;height:9px;background:#fff;border-radius:4px;box-shadow:0 1px 0 #aab4be"></div>
<svg class="a" style="left:1150px;top:265px" width="5" height="5" shape-rendering="crispEdges"><g fill="#0000ff"><rect x="2" y="0" width="1" height="5"/><rect x="0" y="1" width="2" height="1"/><rect x="3" y="1" width="2" height="1"/><rect x="0" y="3" width="2" height="1"/><rect x="3" y="3" width="2" height="1"/><rect x="1" y="2" width="1" height="1" fill="#6060ff"/></g></svg>
<div class="a" style="left:1229px;top:264px;width:62px;height:9px;background:#fff;border-radius:4px;box-shadow:0 1px 0 #aab4be"></div>
<svg class="a" style="left:1258px;top:265px" width="5" height="5" shape-rendering="crispEdges"><g fill="#0000ff"><rect x="2" y="0" width="1" height="5"/><rect x="0" y="1" width="2" height="1"/><rect x="3" y="1" width="2" height="1"/><rect x="0" y="3" width="2" height="1"/><rect x="3" y="3" width="2" height="1"/><rect x="1" y="2" width="1" height="1" fill="#6060ff"/></g></svg>
<div class="a" style="left:486px;top:276px;width:945px;height:391px;background:#fff"></div>
<div class="a" style="left:486px;top:276px;width:945px;height:1px;background:#fff"></div>
<div class="a" style="left:486px;top:294px;width:945px;height:1px;background:#000"></div>
<div class="a" style="left:487px;top:277px;width:23px;height:17px;background:#c0dcc0;border-top:1px solid #fff;border-left:1px solid #fff;border-right:1px solid #a0a0a0;border-bottom:1px solid #a0a0a0;box-sizing:border-box"></div>
<div class="a" style="left:510px;top:277px;width:1px;height:18px;background:#000"></div>
<div class="a" style="left:487px;top:295px;width:23px;height:17px;background:#fff"></div>
<div class="a" style="left:510px;top:295px;width:1px;height:18px;background:#c8c8c8"></div>
<div class="a" style="left:487px;top:312px;width:24px;height:1px;background:#c8c8c8"></div>
<div class="a" style="left:511px;top:277px;width:173px;height:17px;background:#c0dcc0;border-top:1px solid #fff;border-left:1px solid #fff;border-right:1px solid #a0a0a0;border-bottom:1px solid #a0a0a0;box-sizing:border-box"></div>
<div class="a" style="left:684px;top:277px;width:1px;height:18px;background:#000"></div>
<div class="a" style="left:511px;top:295px;width:173px;height:17px;background:#fff"></div>
<div class="a" style="left:684px;top:295px;width:1px;height:18px;background:#c8c8c8"></div>
<div class="a" style="left:511px;top:312px;width:174px;height:1px;background:#c8c8c8"></div>
<div class="a" style="left:685px;top:277px;width:40px;height:17px;background:#c0dcc0;border-top:1px solid #fff;border-left:1px solid #fff;border-right:1px solid #a0a0a0;border-bottom:1px solid #a0a0a0;box-sizing:border-box"></div>
<div class="a" style="left:725px;top:277px;width:1px;height:18px;background:#000"></div>
<div class="a" style="left:685px;top:295px;width:40px;height:17px;background:#fff"></div>
<div class="a" style="left:725px;top:295px;width:1px;height:18px;background:#c8c8c8"></div>
<div class="a" style="left:685px;top:312px;width:41px;height:1px;background:#c8c8c8"></div>
<div class="a" style="left:726px;top:277px;width:40px;height:17px;background:#c0dcc0;border-top:1px solid #fff;border-left:1px solid #fff;border-right:1px solid #a0a0a0;border-bottom:1px solid #a0a0a0;box-sizing:border-box"></div>
<div class="a" style="left:766px;top:277px;width:1px;height:18px;background:#000"></div>
<div class="a" style="left:726px;top:295px;width:40px;height:17px;background:#fff"></div>
<div class="a" style="left:766px;top:295px;width:1px;height:18px;background:#c8c8c8"></div>
<div class="a" style="left:726px;top:312px;width:41px;height:1px;background:#c8c8c8"></div>
<div class="a" style="left:767px;top:277px;width:52px;height:17px;background:#c0dcc0;border-top:1px solid #fff;border-left:1px solid #fff;border-right:1px solid #a0a0a0;border-bottom:1px solid #a0a0a0;box-sizing:border-box"></div>
<div class="a" style="left:819px;top:277px;width:1px;height:18px;background:#000"></div>
<div class="a" style="left:767px;top:295px;width:52px;height:17px;background:#fff"></div>
<div class="a" style="left:819px;top:295px;width:1px;height:18px;background:#c8c8c8"></div>
<div class="a" style="left:767px;top:312px;width:53px;height:1px;background:#c8c8c8"></div>
<div class="a" style="left:820px;top:277px;width:61px;height:17px;background:#c0dcc0;border-top:1px solid #fff;border-left:1px solid #fff;border-right:1px solid #a0a0a0;border-bottom:1px solid #a0a0a0;box-sizing:border-box"></div>
<div class="a" style="left:881px;top:277px;width:1px;height:18px;background:#000"></div>
<div class="a" style="left:820px;top:295px;width:61px;height:17px;background:#fff"></div>
<div class="a" style="left:881px;top:295px;width:1px;height:18px;background:#c8c8c8"></div>
<div class="a" style="left:820px;top:312px;width:62px;height:1px;background:#c8c8c8"></div>
<div class="a" style="left:882px;top:277px;width:74px;height:17px;background:#c0dcc0;border-top:1px solid #fff;border-left:1px solid #fff;border-right:1px solid #a0a0a0;border-bottom:1px solid #a0a0a0;box-sizing:border-box"></div>
<div class="a" style="left:956px;top:277px;width:1px;height:18px;background:#000"></div>
<div class="a" style="left:882px;top:295px;width:74px;height:17px;background:#fff"></div>
<div class="a" style="left:956px;top:295px;width:1px;height:18px;background:#c8c8c8"></div>
<div class="a" style="left:882px;top:312px;width:75px;height:1px;background:#c8c8c8"></div>
<div class="a" style="left:957px;top:277px;width:70px;height:17px;background:#c0dcc0;border-top:1px solid #fff;border-left:1px solid #fff;border-right:1px solid #a0a0a0;border-bottom:1px solid #a0a0a0;box-sizing:border-box"></div>
<div class="a" style="left:1027px;top:277px;width:1px;height:18px;background:#000"></div>
<div class="a" style="left:957px;top:295px;width:70px;height:17px;background:#fff"></div>
<div class="a" style="left:1027px;top:295px;width:1px;height:18px;background:#c8c8c8"></div>
<div class="a" style="left:957px;top:312px;width:71px;height:1px;background:#c8c8c8"></div>
<div class="a" style="left:1028px;top:277px;width:80px;height:17px;background:#c0dcc0;border-top:1px solid #fff;border-left:1px solid #fff;border-right:1px solid #a0a0a0;border-bottom:1px solid #a0a0a0;box-sizing:border-box"></div>
<div class="a" style="left:1108px;top:277px;width:1px;height:18px;background:#000"></div>
<div class="a" style="left:1028px;top:295px;width:80px;height:17px;background:#fff"></div>
<div class="a" style="left:1108px;top:295px;width:1px;height:18px;background:#c8c8c8"></div>
<div class="a" style="left:1028px;top:312px;width:81px;height:1px;background:#c8c8c8"></div>
<div class="a" style="left:1109px;top:277px;width:28px;height:17px;background:#808080;border-top:1px solid #fff;border-left:1px solid #fff;border-right:1px solid #a0a0a0;border-bottom:1px solid #a0a0a0;box-sizing:border-box"></div>
<div class="a" style="left:1137px;top:277px;width:1px;height:18px;background:#000"></div>
<div class="a" style="left:1109px;top:295px;width:28px;height:17px;background:#808080"></div>
<div class="a" style="left:1137px;top:295px;width:1px;height:18px;background:#c8c8c8"></div>
<div class="a" style="left:1109px;top:312px;width:29px;height:1px;background:#c8c8c8"></div>
<div class="a" style="left:1138px;top:277px;width:29px;height:17px;background:#98b2d4;border-top:1px solid #fff;border-left:1px solid #fff;border-right:1px solid #a0a0a0;border-bottom:1px solid #a0a0a0;box-sizing:border-box"></div>
<div class="a" style="left:1167px;top:277px;width:1px;height:18px;background:#000"></div>
<div class="a" style="left:1138px;top:295px;width:29px;height:17px;background:#98b2d4"></div>
<div class="a" style="left:1167px;top:295px;width:1px;height:18px;background:#c8c8c8"></div>
<div class="a" style="left:1138px;top:312px;width:30px;height:1px;background:#c8c8c8"></div>
<div class="a" style="left:1168px;top:277px;width:60px;height:17px;background:#c0dcc0;border-top:1px solid #fff;border-left:1px solid #fff;border-right:1px solid #a0a0a0;border-bottom:1px solid #a0a0a0;box-sizing:border-box"></div>
<div class="a" style="left:1228px;top:277px;width:1px;height:18px;background:#000"></div>
<div class="a" style="left:1168px;top:295px;width:60px;height:17px;background:#fff"></div>
<div class="a" style="left:1228px;top:295px;width:1px;height:18px;background:#c8c8c8"></div>
<div class="a" style="left:1168px;top:312px;width:61px;height:1px;background:#c8c8c8"></div>
<div class="a" style="left:1229px;top:277px;width:62px;height:17px;background:#fffde2;border-top:1px solid #fff;border-left:1px solid #fff;border-right:1px solid #a0a0a0;border-bottom:1px solid #a0a0a0;box-sizing:border-box"></div>
<div class="a" style="left:1291px;top:277px;width:1px;height:18px;background:#000"></div>
<div class="a" style="left:1229px;top:295px;width:62px;height:17px;background:#fffde2"></div>
<div class="a" style="left:1291px;top:295px;width:1px;height:18px;background:#c8c8c8"></div>
<div class="a" style="left:1229px;top:312px;width:63px;height:1px;background:#c8c8c8"></div>
<div class="a" style="left:1292px;top:277px;width:70px;height:17px;background:#c0dcc0;border-top:1px solid #fff;border-left:1px solid #fff;border-right:1px solid #a0a0a0;border-bottom:1px solid #a0a0a0;box-sizing:border-box"></div>
<div class="a" style="left:1362px;top:277px;width:1px;height:18px;background:#000"></div>
<div class="a" style="left:1292px;top:295px;width:70px;height:17px;background:#fff"></div>
<div class="a" style="left:1362px;top:295px;width:1px;height:18px;background:#c8c8c8"></div>
<div class="a" style="left:1292px;top:312px;width:71px;height:1px;background:#c8c8c8"></div>
<div class="a" style="left:1363px;top:277px;width:39px;height:17px;background:#c0dcc0;border-top:1px solid #fff;border-left:1px solid #fff;border-right:1px solid #a0a0a0;border-bottom:1px solid #a0a0a0;box-sizing:border-box"></div>
<div class="a" style="left:1402px;top:277px;width:1px;height:18px;background:#000"></div>
<div class="a" style="left:1363px;top:295px;width:39px;height:17px;background:#fff"></div>
<div class="a" style="left:1402px;top:295px;width:1px;height:18px;background:#c8c8c8"></div>
<div class="a" style="left:1363px;top:312px;width:40px;height:1px;background:#c8c8c8"></div>
<div class="a" style="left:1403px;top:277px;width:71px;height:17px;background:#c0dcc0;border-top:1px solid #fff;border-left:1px solid #fff;border-right:1px solid #a0a0a0;border-bottom:1px solid #a0a0a0;box-sizing:border-box"></div>
<div class="a" style="left:1474px;top:277px;width:1px;height:18px;background:#000"></div>
<div class="a" style="left:1403px;top:295px;width:71px;height:17px;background:#fff"></div>
<div class="a" style="left:1474px;top:295px;width:1px;height:18px;background:#c8c8c8"></div>
<div class="a" style="left:1403px;top:312px;width:72px;height:1px;background:#c8c8c8"></div>
<div class="t" style="left:549.50px;top:281.25px;font-size:11px;line-height:11px;color:#000;transform:scaleX(0.9757);transform-origin:0 0;">Descrição dos Itens</div>
<div class="t" style="left:689.70px;top:281.25px;font-size:11px;line-height:11px;color:#000;transform:scaleX(0.8941);transform-origin:0 0;">O/CST</div>
<div class="t" style="left:732.60px;top:281.25px;font-size:11px;line-height:11px;color:#000;transform:scaleX(0.8645);transform-origin:0 0;">CFOP</div>
<div class="t" style="left:780.30px;top:281.25px;font-size:11px;line-height:11px;color:#000;transform:scaleX(0.8381);transform-origin:0 0;">CEST</div>
<div class="t" style="left:838.40px;top:281.25px;font-size:11px;line-height:11px;color:#000;transform:scaleX(0.9400);transform-origin:0 0;">NCM</div>
<div class="t" style="left:895.20px;top:281.25px;font-size:11px;line-height:11px;color:#000;transform:scaleX(0.9327);transform-origin:0 0;">B.Calc.ST</div>
<div class="t" style="left:961.90px;top:281.25px;font-size:11px;line-height:11px;color:#000;transform:scaleX(0.9146);transform-origin:0 0;">Val. ICMS ST</div>
<div class="t" style="left:1031.80px;top:281.25px;font-size:11px;line-height:11px;color:#000;transform:scaleX(0.9457);transform-origin:0 0;">ICMS-UF-Dest.</div>
<div class="t" style="left:1172.30px;top:281.25px;font-size:11px;line-height:11px;color:#000;transform:scaleX(1.0289);transform-origin:0 0;">Prod. Ant.</div>
<div class="t" style="left:1234.20px;top:281.25px;font-size:11px;line-height:11px;color:#000;transform:scaleX(0.9925);transform-origin:0 0;">Prod. Novo</div>
<div class="t" style="left:1295.40px;top:281.25px;font-size:11px;line-height:11px;color:#000;transform:scaleX(0.9454);transform-origin:0 0;">B.Calc. ICMS</div>
<div class="t" style="left:1366.00px;top:281.25px;font-size:11px;line-height:11px;color:#000;transform:scaleX(0.9766);transform-origin:0 0;">% Aliq.</div>
<div class="t" style="left:1142.70px;top:281.25px;font-size:11px;line-height:11px;color:#000;transform:scaleX(0.9400);transform-origin:0 0;">CLS</div>
<div class="t" style="left:1414.70px;top:281.25px;font-size:11px;line-height:11px;color:#000;transform:scaleX(0.9791);transform-origin:0 0;">Val. ICMS</div>
<div class="t" style="left:1111.60px;top:281.25px;font-size:11px;line-height:11px;color:#f0f0f0;transform:scaleX(1.0128);transform-origin:0 0;">Item</div>
<div class="t" style="left:512.90px;top:299.45px;font-size:11px;line-height:11px;color:#000;transform:scaleX(0.8902);transform-origin:0 0;">CONJ EMENDA OPT MEC AER SUBT</div>
<div class="t" style="left:695.80px;top:299.45px;font-size:11px;line-height:11px;color:#000;transform:scaleX(0.9400);transform-origin:0 0;">000</div>
<div class="t" style="left:734.00px;top:299.45px;font-size:11px;line-height:11px;color:#000;transform:scaleX(0.9730);transform-origin:0 0;">6552</div>
<div class="t" style="left:772.00px;top:299.45px;font-size:11px;line-height:11px;color:#000;transform:scaleX(1.0056);transform-origin:0 0;">2111000</div>
<div class="t" style="left:825.70px;top:299.45px;font-size:11px;line-height:11px;color:#000;transform:scaleX(0.9782);transform-origin:0 0;">85177900</div>
<div class="t" style="left:931.00px;top:299.45px;font-size:11px;line-height:11px;color:#000;transform:scaleX(0.9892);transform-origin:0 0;">0,00</div>
<div class="t" style="left:1002.00px;top:299.45px;font-size:11px;line-height:11px;color:#000;transform:scaleX(0.9892);transform-origin:0 0;">0,00</div>
<div class="t" style="left:1083.00px;top:299.45px;font-size:11px;line-height:11px;color:#000;transform:scaleX(0.9892);transform-origin:0 0;">0,00</div>
<div class="t" style="left:1146.50px;top:299.45px;font-size:11px;line-height:11px;color:#000;transform:scaleX(0.9400);transform-origin:0 0;">20</div>
<div class="t" style="left:1247.50px;top:299.45px;font-size:11px;line-height:11px;color:#000;transform:scaleX(0.9854);transform-origin:0 0;">8525</div>
<div class="t" style="left:1315.00px;top:299.45px;font-size:11px;line-height:11px;color:#000;transform:scaleX(1.0104);transform-origin:0 0;">9.185,80</div>
<div class="t" style="left:1368.30px;top:299.45px;font-size:11px;line-height:11px;color:#000;transform:scaleX(0.9367);transform-origin:0 0;">12,00</div>
<div class="t" style="left:1428.60px;top:299.45px;font-size:11px;line-height:11px;color:#000;transform:scaleX(0.9400);transform-origin:0 0;">12</div>
<div class="t" style="left:1117.40px;top:299.45px;font-size:11px;line-height:11px;color:#fff;transform:scaleX(0.9400);transform-origin:0 0;">01</div>
<div class="a" style="left:495px;top:278px;width:12px;height:11px;background:#f0f0f0;border:1px solid #707070;border-radius:2px;box-sizing:border-box"></div>
<div class="a" style="left:494px;top:299px;width:12px;height:10px;background:#fff;border:1px solid #000;box-sizing:border-box"></div>
<div class="a" style="left:486px;top:667px;width:945px;height:16px;background:#f0f0f0"></div>
<div class="a" style="left:504px;top:674px;width:17px;height:2px;background:#808080"></div>
<div class="a" style="left:485px;top:683px;width:946px;height:1px;background:#a0a0a0"></div>
<div class="a" style="left:485px;top:685px;width:946px;height:1px;background:#fff"></div>
<div class="a" style="left:485px;top:685px;width:1px;height:32px;background:#fff"></div>
<div class="a" style="left:485px;top:717px;width:946px;height:1px;background:#9aa0a8"></div>
<div class="a" style="left:485px;top:718px;width:946px;height:1px;background:#e0e6ec"></div>
<div class="a" style="left:490px;top:690px;width:134px;height:22px;background:#fdfdfd;border-radius:4px;box-shadow:0 1px 1px #9aa4ae"></div>
<div class="t" style="left:493.00px;top:696.17px;font-size:12.5px;line-height:12.5px;color:#000;transform:scaleX(1.1374);transform-origin:0 0;">Produto por seleção</div>
<div class="a" style="left:631px;top:690px;width:134px;height:22px;background:#fdfdfd;border-radius:4px;box-shadow:0 1px 1px #9aa4ae"></div>
<div class="t" style="left:632.20px;top:696.17px;font-size:12.5px;line-height:12.5px;color:#000;transform:scaleX(1.0302);transform-origin:0 0;">Localizar GNRE/DARE</div>
<div class="a" style="left:772px;top:690px;width:134px;height:22px;background:#fdfdfd;border-radius:4px;box-shadow:0 1px 1px #9aa4ae"></div>
<div class="t" style="left:803.00px;top:695.40px;font-size:12px;line-height:12px;color:#000;font-weight:bold;transform:scaleX(1.0982);transform-origin:0 0;">Alterar CLS</div>
<div class="a" style="left:913px;top:690px;width:134px;height:22px;background:#fdfdfd;border-radius:4px;box-shadow:0 1px 1px #9aa4ae"></div>
<div class="t" style="left:928.80px;top:695.40px;font-size:12px;line-height:12px;color:#000;font-weight:bold;transform:scaleX(1.1138);transform-origin:0 0;">Reclassificar NF</div>
<div class="a" style="left:1055px;top:690px;width:131px;height:22px;background:#fdfdfd;border-radius:4px;box-shadow:0 1px 1px #9aa4ae"></div>
<div class="t" style="left:1059.00px;top:695.65px;font-size:11px;line-height:11px;color:#000;transform:scaleX(1.1593);transform-origin:0 0;">Alterar Movimento NF</div>
<div class="a" style="left:1197px;top:690px;width:243px;height:23px;border:1px solid #fff;box-sizing:border-box"></div>
<svg class="a" style="left:0;top:0" width="1431" height="730" viewBox="0 0 1431 730">
<g fill="none" stroke="#f2601c" stroke-width="2.6">
<ellipse cx="1127" cy="143" rx="67" ry="25.5"/>
<ellipse cx="1129.6" cy="189.6" rx="73.3" ry="28.6"/>
<line x1="1145.6" y1="186.5" x2="1124" y2="158"/>
</g>
<path d="M1120 153 L1130 157.5 L1123.5 162 Z" fill="#f2601c"/>
</svg>
</body></html>
